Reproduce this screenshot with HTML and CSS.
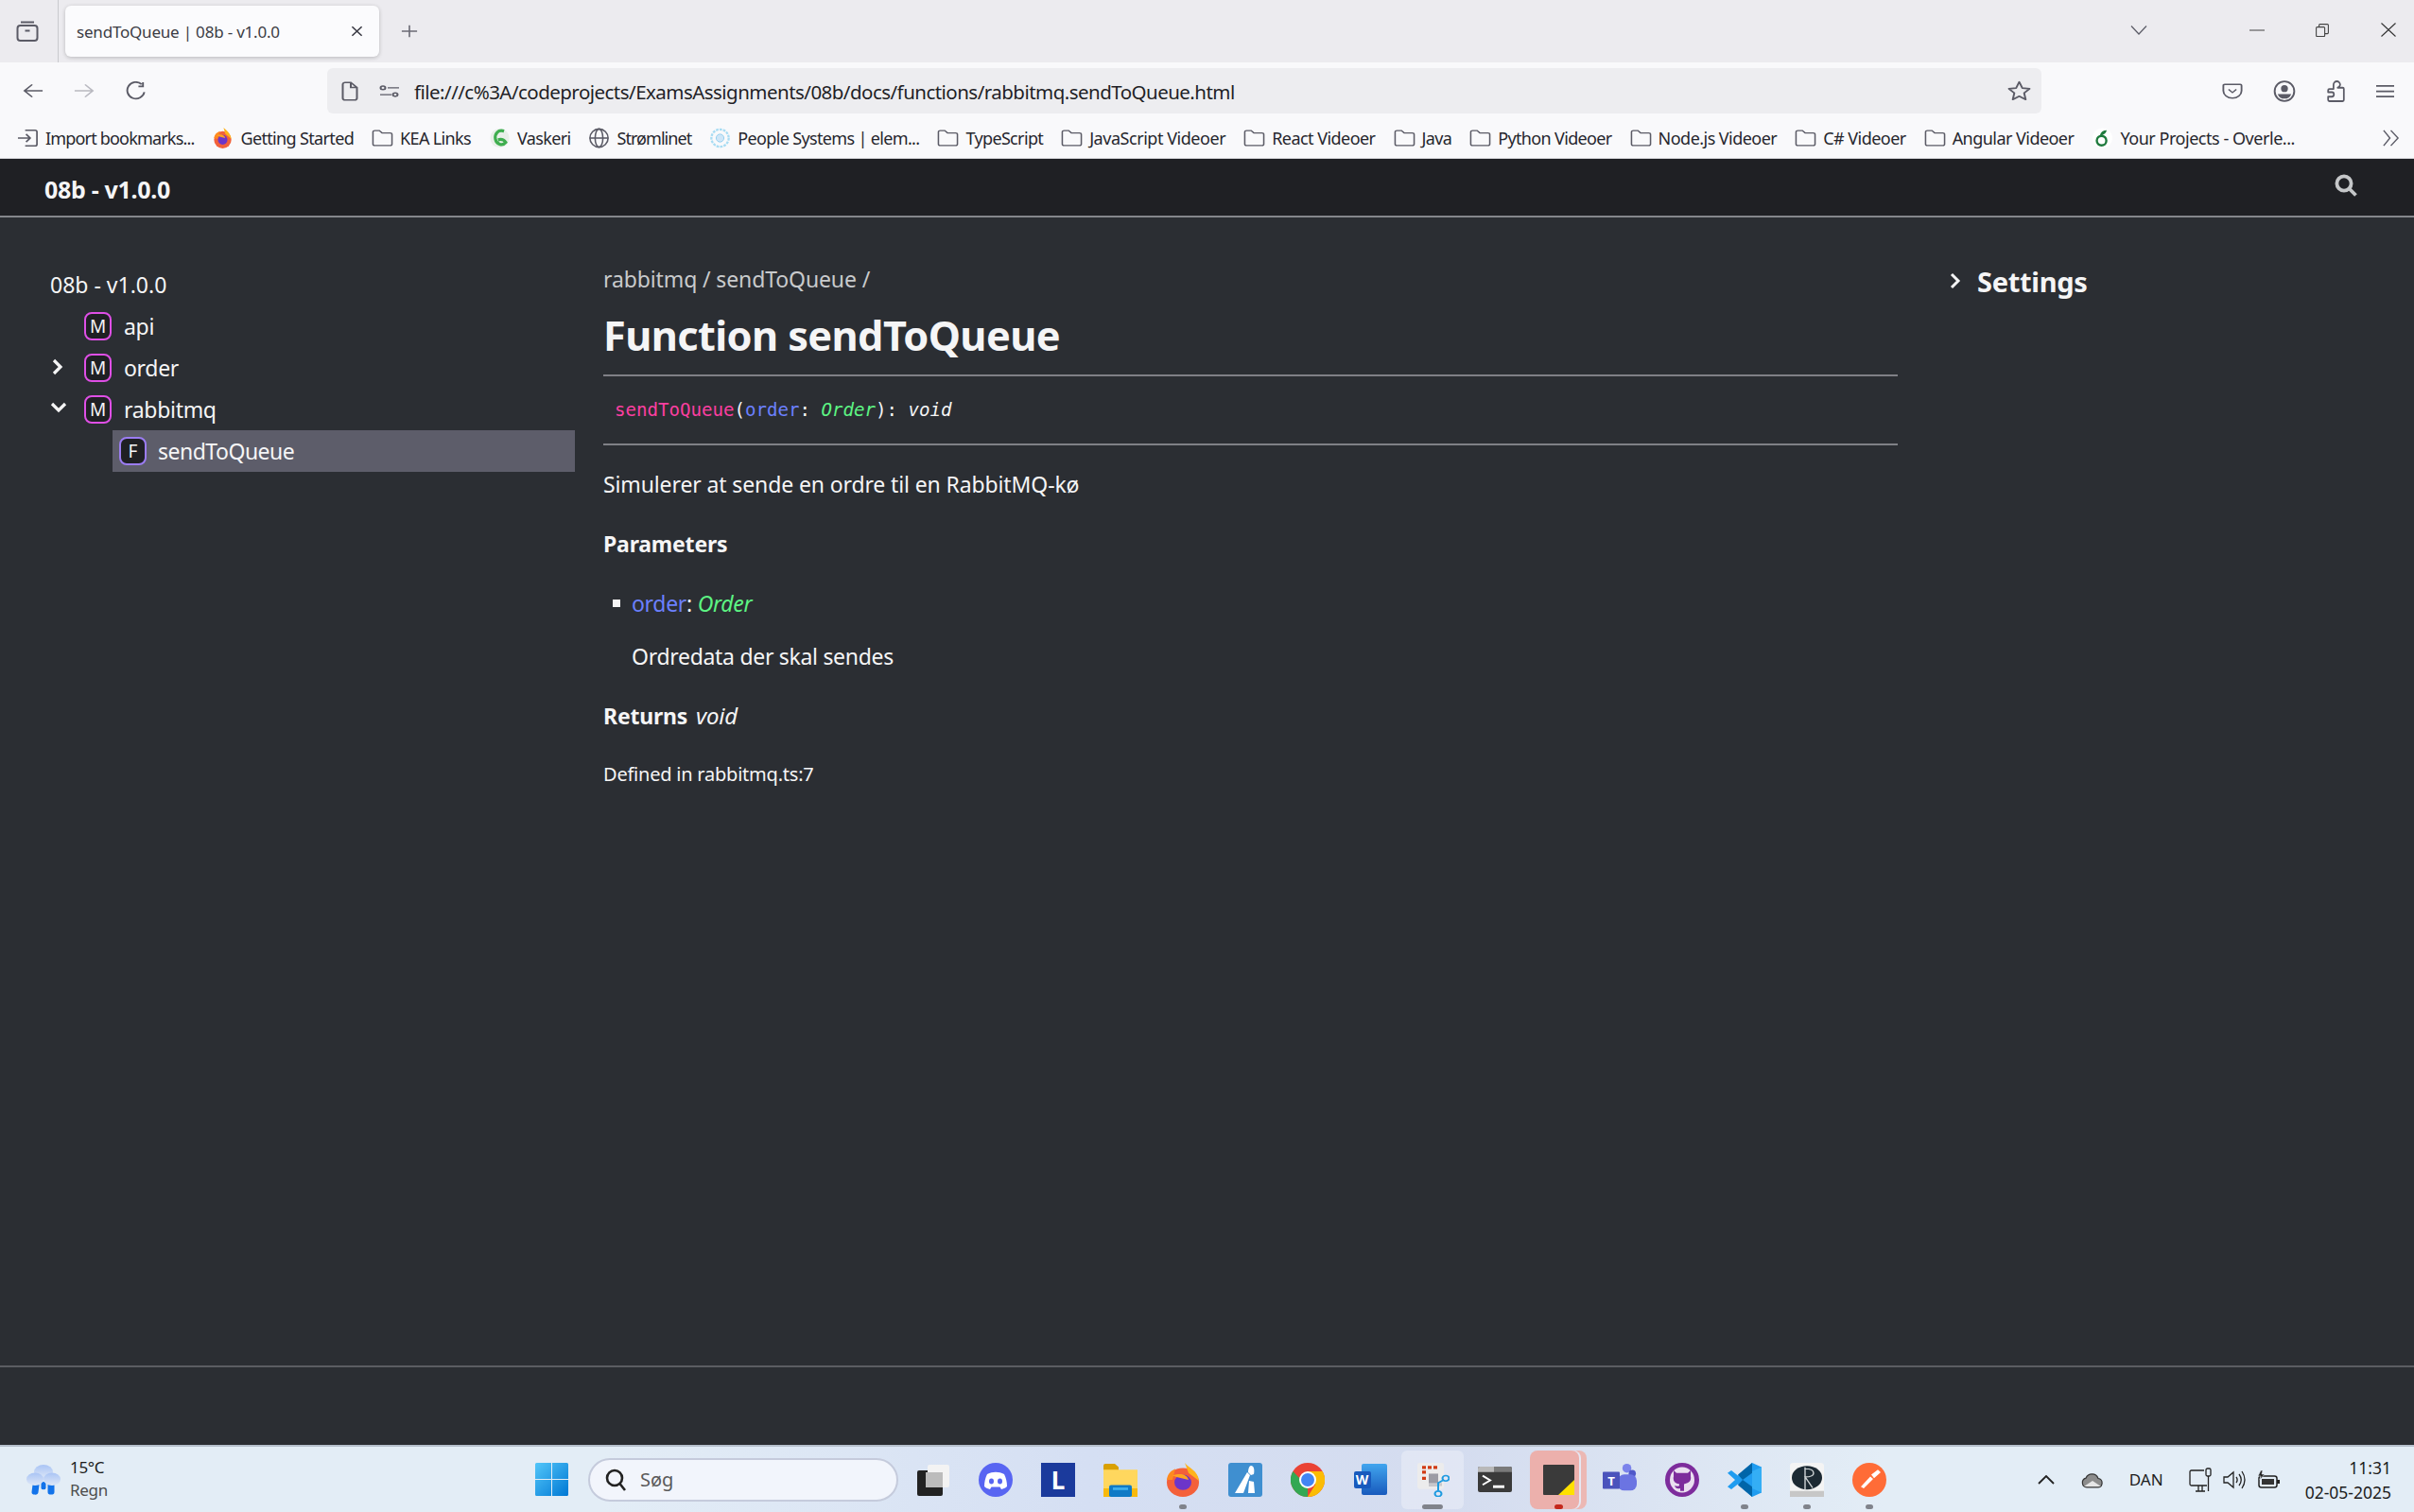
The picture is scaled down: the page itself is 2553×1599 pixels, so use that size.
FILE: index.html
```html
<!DOCTYPE html>
<html lang="da">
<head>
<meta charset="utf-8">
<title>sendToQueue | 08b - v1.0.0</title>
<link rel="stylesheet" href="styles.css">
</head>
<body>
<svg class="defs" width="0" height="0">
  <defs>
    <symbol id="folder" viewBox="0 0 24 24" preserveAspectRatio="none"><path d="M1.500 4.500a2 2 0 0 1 2-2h5l3 3h9a2 2 0 0 1 2 2v12a2 2 0 0 1-2 2h-17a2 2 0 0 1-2-2z" fill="none" stroke="#5b5b66" stroke-width="1.600"/></symbol>
  </defs>
</svg>
<div class="window">
  <div class="tabstrip">
    <div class="side-btn">
      <svg class="ico24" viewBox="0 0 24 24" fill="none" stroke="#5b5b66" stroke-width="2"><path d="M5 2.500h14"/><rect x="1.500" y="6" width="21" height="16" rx="3"/><path d="M9.500 11.500h5"/></svg>
    </div>
    <div class="tab">
      <span class="tab-title">sendToQueue | 08b - v1.0.0</span>
      <svg class="ico14" viewBox="0 0 14 14" preserveAspectRatio="none" stroke="#3a3a44" stroke-width="1.700"><path d="M1.500 1.500l11 11M12.500 1.500l-11 11"/></svg>
    </div>
    <svg class="newtab" viewBox="0 0 20 20" preserveAspectRatio="none" stroke="#6b6b76" stroke-width="1.800"><path d="M10 1v18M1 10h18"/></svg>
    <div class="win-controls">
      <svg class="win-chev" viewBox="0 0 18 10" fill="none" stroke="#5b5b66" stroke-width="1.200"><path d="M1 .5l8 8.500 8-8.500"/></svg>
      <svg class="win-min" viewBox="0 0 16 2" stroke="#444" stroke-width="1"><path d="M0 1h16"/></svg>
      <svg class="win-max" viewBox="0 0 14 14" fill="none" stroke="#444" stroke-width="1.100"><rect x=".6" y="3.600" width="9" height="10" rx="1"/><path d="M3.600 3.600V1.600a1 1 0 0 1 1-1h7.800a1 1 0 0 1 1 1v8a1 1 0 0 1-1 1H9.600"/></svg>
      <svg class="win-close" viewBox="0 0 16 15" fill="none" stroke="#333" stroke-width="1.100"><path d="M.5.500l15 14M15.500.500l-15 14"/></svg>
    </div>
  </div>

  <div class="toolbar">
    <svg class="nav-back" viewBox="0 0 24 24" preserveAspectRatio="none" fill="none" stroke="#5b5b66" stroke-width="2"><path d="M23 12H2M11 2l-9 10 9 10"/></svg>
    <svg class="nav-fwd" viewBox="0 0 24 24" preserveAspectRatio="none" fill="none" stroke="#b9b9c0" stroke-width="2"><path d="M1 12h21M13 2l9 10-9 10"/></svg>
    <svg class="nav-reload" viewBox="0 0 24 24" preserveAspectRatio="none" fill="none" stroke="#5b5b66" stroke-width="2"><path d="M20.500 13a9.500 10 0 1 1-3-9.500M19 1v5h-5"/></svg>
    <div class="urlbar">
      <svg class="doc-ico" viewBox="0 0 18 26" preserveAspectRatio="none" fill="none" stroke="#5b5b66" stroke-width="2"><path d="M1.500 4a2.500 2.500 0 0 1 2.500-2.500h6l6.500 6.500v14a2.500 2.500 0 0 1-2.500 2.500H4a2.500 2.500 0 0 1-2.500-2.500zM10 1.500V8h6.500"/></svg>
      <svg class="ctl-ico" viewBox="0 0 22 18" preserveAspectRatio="none" fill="none" stroke="#5b5b66" stroke-width="2"><path d="M9 4h12M1 14h12"/><circle cx="4" cy="4" r="2.500"/><circle cx="17" cy="14" r="2.500"/></svg>
      <span class="url-text">file:///c%3A/codeprojects/ExamsAssignments/08b/docs/functions/rabbitmq.sendToQueue.html</span>
      <svg class="star-ico" viewBox="0 0 26 26" preserveAspectRatio="none" fill="none" stroke="#5b5b66" stroke-width="2" stroke-linejoin="round"><path d="M13 2l3.400 7.500 8 .9-6 5.500 1.700 8L13 19.800 5.900 23.900l1.700-8-6-5.500 8-.9z"/></svg>
    </div>
    <div class="tool-right">
      <svg class="tool-pocket" viewBox="0 0 24 24" preserveAspectRatio="none" fill="none" stroke="#5b5b66" stroke-width="2"><path d="M3 3h18a1.500 1.500 0 0 1 1.500 1.500V12a10.500 10.500 0 0 1-21 0V4.500A1.500 1.500 0 0 1 3 3z"/><path d="M7.500 10l4.500 4.500 4.500-4.500" stroke-width="1.700"/></svg>
      <svg class="tool-profile" viewBox="0 0 24 24"><circle cx="12" cy="12" r="10.800" fill="none" stroke="#5b5b66" stroke-width="2"/><circle cx="12" cy="9" r="3.800" fill="#5b5b66"/><path d="M4.500 15h15a8 8 0 0 1-15 0z" fill="#5b5b66"/></svg>
      <svg class="tool-ext" viewBox="0 0 24 24" preserveAspectRatio="none" fill="none" stroke="#5b5b66" stroke-width="2" stroke-linejoin="round"><path d="M14 8h6a1.500 1.500 0 0 1 1.500 1.500v12A1.500 1.500 0 0 1 20 23H4a1.500 1.500 0 0 1-1.500-1.500V18H7a2.500 2.500 0 0 0 0-5H2.500v-2A1.500 1.500 0 0 1 4 9.500h5V5a4 4 0 0 1 8 0 4 4 0 0 1-3 3z"/></svg>
      <svg class="tool-menu" viewBox="0 0 24 24" preserveAspectRatio="none" stroke="#5b5b66" stroke-width="2.800"><path d="M0 3h24M0 12h24M0 21h24"/></svg>
    </div>
  </div>

  <div class="bookmarks">
    <div class="bm bm-tighter"><svg class="bm-ico" viewBox="0 0 24 24" preserveAspectRatio="none" fill="none" stroke="#5b5b66" stroke-width="1.800"><path d="M9 3h11a2 2 0 0 1 2 2v14a2 2 0 0 1-2 2H9M1 12h13M10 7.500l4.500 4.500L10 16.500"/></svg><span>Import bookmarks...</span></div>
    <div class="bm"><svg class="bm-ico" viewBox="0 0 24 24"><circle cx="12" cy="14" r="10" fill="#f2613a"/><path d="M13 0c3 3 8 6 9 13L15 7z" fill="#ffb31a"/><path d="M2 12C3 6 7 5 9 4L6 13z" fill="#ff8a1f"/><circle cx="12" cy="14" r="5.500" fill="#6c35c9"/><path d="M5 9c4-2 9-1 10 3-3-1-6-1-10-3z" fill="#ffa41f"/></svg><span>Getting Started</span></div>
    <div class="bm"><svg class="bm-folder"><use href="#folder"/></svg><span>KEA Links</span></div>
    <div class="bm"><svg class="bm-ico" viewBox="0 0 24 24" fill="none"><circle cx="12" cy="12" r="11" fill="#e9efe9"/><path d="M17 4c-7-2-11 3-10 9 1 6 8 9 12 4-2-3-5-4-9-3" stroke="#3fae4f" stroke-width="3.500"/></svg><span>Vaskeri</span></div>
    <div class="bm bm-tightest"><svg class="bm-ico" viewBox="0 0 24 24" fill="none" stroke="#5b5b66" stroke-width="1.700"><circle cx="12" cy="12" r="10.500"/><ellipse cx="12" cy="12" rx="4.500" ry="10.500"/><path d="M1.500 12h21"/></svg><span>Strømlinet</span></div>
    <div class="bm"><svg class="bm-ico" viewBox="0 0 24 24" fill="none"><circle cx="12" cy="12" r="10" stroke="#a8dcf3" stroke-width="2.500" stroke-dasharray="3 1.200"/><circle cx="12" cy="12" r="4.500" fill="#cfe6f7" stroke="#8fcdee"/></svg><span>People Systems | elem...</span></div>
    <div class="bm"><svg class="bm-folder"><use href="#folder"/></svg><span>TypeScript</span></div>
    <div class="bm bm-loose"><svg class="bm-folder"><use href="#folder"/></svg><span>JavaScript Videoer</span></div>
    <div class="bm bm-mid"><svg class="bm-folder"><use href="#folder"/></svg><span>React Videoer</span></div>
    <div class="bm"><svg class="bm-folder"><use href="#folder"/></svg><span>Java</span></div>
    <div class="bm"><svg class="bm-folder"><use href="#folder"/></svg><span>Python Videoer</span></div>
    <div class="bm bm-mid"><svg class="bm-folder"><use href="#folder"/></svg><span>Node.js Videoer</span></div>
    <div class="bm bm-mid"><svg class="bm-folder"><use href="#folder"/></svg><span>C# Videoer</span></div>
    <div class="bm bm-mid"><svg class="bm-folder"><use href="#folder"/></svg><span>Angular Videoer</span></div>
    <div class="bm bm-loose"><svg class="bm-ico" viewBox="0 0 24 24" fill="none"><circle cx="12" cy="12" r="11.500" fill="#fff"/><circle cx="11" cy="15" r="5.500" stroke="#1f7a3d" stroke-width="2.600"/><path d="M9 9c1-4 4-6 8-6-1 4-4 6-8 6z" fill="#1f7a3d"/></svg><span>Your Projects - Overle...</span></div>
    <svg class="bm-more" viewBox="0 0 20 20" preserveAspectRatio="none" fill="none" stroke="#5b5b66" stroke-width="1.500"><path d="M2 1l7 9-7 9M10 1l8 9-8 9"/></svg>
  </div>

  <div class="page">
    <header class="site-head">
      <span class="site-title">08b - v1.0.0</span>
      <svg class="search-ico" viewBox="0 0 24 24" fill="none" stroke="#c5c7c9" stroke-width="3.800"><circle cx="10" cy="10" r="7.600"/><path d="M15.500 15.500l7 7"/></svg>
    </header>
    <main class="main">
      <nav class="sidebar">
        <div class="nav-root">08b - v1.0.0</div>
        <div class="nav-row"><span class="twisty"></span><span class="badge mod">M</span><span>api</span></div>
        <div class="nav-row"><span class="twisty"><svg class="chev-r" viewBox="0 0 12 18" fill="none" stroke="#f5f5f6" stroke-width="3.200"><path d="M2 2l7 7-7 7"/></svg></span><span class="badge mod">M</span><span>order</span></div>
        <div class="nav-row"><span class="twisty"><svg class="chev-d" viewBox="0 0 18 12" fill="none" stroke="#f5f5f6" stroke-width="3.200"><path d="M2 2l7 7 7-7"/></svg></span><span class="badge mod">M</span><span>rabbitmq</span></div>
        <div class="nav-row selected"><span class="badge fn">F</span><span>sendToQueue</span></div>
      </nav>
      <article class="content">
        <div class="crumbs">rabbitmq / sendToQueue /</div>
        <h1 class="title">Function sendToQueue</h1>
        <div class="signature"><span class="c-fn">sendToQueue</span>(<span class="c-var">order</span>: <span class="c-type">Order</span>): <span class="c-void">void</span></div>
        <p class="para">Simulerer at sende en ordre til en RabbitMQ-kø</p>
        <h4 class="subhead">Parameters</h4>
        <div class="param"><span class="bullet"></span><span><span class="p-name">order</span>: <em class="p-type">Order</em></span></div>
        <p class="param-doc">Ordredata der skal sendes</p>
        <h4 class="subhead returns">Returns <em class="ret-type">void</em></h4>
        <p class="defined">Defined in rabbitmq.ts:7</p>
      </article>
      <aside class="settings">
        <svg class="chev-s" viewBox="0 0 12 18" fill="none" stroke="#f5f5f6" stroke-width="3"><path d="M2 2l7 7-7 7"/></svg>
        <span>Settings</span>
      </aside>
    </main>
    <footer class="site-foot"></footer>
  </div>

  <div class="taskbar">
    <div class="weather">
      <svg class="weather-ico" viewBox="0 0 36 42" preserveAspectRatio="none"><defs><linearGradient id="cl" x1="0" y1="0" x2="0" y2="1"><stop offset="0" stop-color="#a9c4f5"/><stop offset="1" stop-color="#dfe8f7"/></linearGradient></defs><path d="M10 28l-1 10M26 28v10" stroke="#1273ea" stroke-width="7" stroke-linecap="round"/><path d="M18 26v6" stroke="#1273ea" stroke-width="5" stroke-linecap="round"/><circle cx="18" cy="10" r="10" fill="url(#cl)"/><circle cx="9" cy="20" r="9" fill="url(#cl)"/><circle cx="27" cy="20" r="9" fill="url(#cl)"/></svg>
      <div class="weather-text"><span class="temp">15°C</span><span class="cond">Regn</span></div>
    </div>
    <div class="apps">
      <svg class="winlogo" viewBox="0 0 35 35"><defs><linearGradient id="wl" x1="0" y1="0" x2="1" y2="1"><stop offset="0" stop-color="#52c6f9"/><stop offset="1" stop-color="#0078d4"/></linearGradient></defs><path d="M0 1.500A1.500 1.500 0 0 1 1.500 0H17v17H0zM18 0h15.500A1.500 1.500 0 0 1 35 1.500V17H18zM0 18h17v17H1.500A1.500 1.500 0 0 1 0 33.500zM18 18h17v15.500a1.500 1.500 0 0 1-1.500 1.500H18z" fill="url(#wl)"/></svg>
      <div class="searchbox">
        <svg class="s-ico" viewBox="0 0 22 24" fill="none" stroke="#222" stroke-width="2.600"><circle cx="10" cy="10" r="8"/><path d="M15.500 16l5.500 7"/></svg>
        <span>Søg</span>
      </div>
      <div class="cell"><svg class="app" viewBox="0 0 36 36"><rect x="1" y="8" width="27" height="27" rx="2" fill="#222"/><rect x="12" y="2" width="23" height="24" rx="2" fill="#f3f3f3"/><rect x="10" y="10" width="18" height="16" fill="#bcbcbc"/></svg></div>
      <div class="cell"><svg class="app" viewBox="0 0 36 36"><circle cx="18" cy="18" r="18" fill="#5865f2"/><path d="M9 12c6-3 12-3 18 0 2 4 3 8 3 13-2 2-4 2.500-6 3l-1.500-2.500h-9L12 28c-2-.5-4-1-6-3 0-5 1-9 3-13z" fill="#fff"/><ellipse cx="13.500" cy="19.500" rx="2.500" ry="3" fill="#5865f2"/><ellipse cx="22.500" cy="19.500" rx="2.500" ry="3" fill="#5865f2"/></svg></div>
      <div class="cell"><span class="app-l">L</span></div>
      <div class="cell"><svg class="app" viewBox="0 0 36 40" preserveAspectRatio="none"><path d="M0 3a2 2 0 0 1 2-2h10l4 4v6H0z" fill="#d9a002"/><path d="M0 8h36v32H0z" fill="#ffd75e"/><path d="M0 30h36v10H0z" fill="#f9b90c"/><rect x="6" y="26" width="24" height="14" rx="2" fill="#0f7ac6"/><rect x="10" y="29" width="16" height="3" fill="#3fb1ee"/></svg></div>
      <div class="cell running"><svg class="app" viewBox="0 0 36 40" preserveAspectRatio="none"><circle cx="18" cy="23" r="17" fill="#f4603a"/><path d="M20 0c4 6 14 9 15 21L24 12z" fill="#ffb31a"/><path d="M1 20C2 11 7 9 10 7L7 20z" fill="#ff8a1f"/><circle cx="18" cy="23" r="9" fill="#6c35c9"/><path d="M7 15c8-3 15-2 17 5-6-2-11-2-17-5z" fill="#ffa41f"/></svg></div>
      <div class="cell"><svg class="app" viewBox="0 0 36 36"><rect width="36" height="36" rx="3" fill="#3f8fd0"/><path d="M7 32L20 10l3 3-7 19zM24 3c3 0 4 4 3 9l-3 1-3-3c0-3 1-7 3-7zM22 19l5 1 1 12h-7z" fill="#fff"/></svg></div>
      <div class="cell"><svg class="app" viewBox="0 0 36 36"><circle cx="18" cy="18" r="18" fill="#ea4335"/><path d="M18 36A18 18 0 0 1 2.400 9L11 18l7 9 0 9z" fill="#34a853"/><path d="M18 9h15.600A18 18 0 0 1 18 36l8-13z" fill="#fbbc04"/><circle cx="18" cy="18" r="9" fill="#fff"/><circle cx="18" cy="18" r="7" fill="#4285f4"/></svg></div>
      <div class="cell"><div class="word"><span class="word-w">W</span></div></div>
      <div class="cell wide-dot snip"><svg class="app" viewBox="0 0 36 44" preserveAspectRatio="none"><rect x="2" y="0" width="28" height="34" rx="3" fill="#ececec"/><path d="M7 4h4v4H7zM13 4h4v4h-4zM19 4h4v4h-4zM7 10h4v4H7zM7 18h4v4H7z" fill="#d13b14"/><path d="M14 14h10v16H14z" fill="#9c9ca4"/><path d="M14 30h14v-4H14z" fill="#c8c8cc"/><circle cx="32" cy="20" r="3.500" fill="none" stroke="#1e9be0" stroke-width="2"/><circle cx="24" cy="40" r="3.500" fill="none" stroke="#1e9be0" stroke-width="2"/><path d="M24 36V26l6-4" stroke="#1e9be0" stroke-width="2" fill="none"/></svg></div>
      <div class="cell"><svg class="app-term" viewBox="0 0 36 28" preserveAspectRatio="none"><rect width="36" height="28" rx="2" fill="#3a3a3a"/><path d="M0 2a2 2 0 0 1 2-2h15v6H0z" fill="#b9b9b9"/><path d="M17 0h17a2 2 0 0 1 2 2v4H17z" fill="#7a7a7a"/><path d="M5 10l8 5-8 5" fill="none" stroke="#fff" stroke-width="2"/><path d="M16 22h12" stroke="#fff" stroke-width="3"/></svg></div>
      <div class="cell sticky"><svg class="app-sticky" viewBox="0 0 33 32"><rect width="33" height="32" rx="1" fill="#3a3a3a"/><path d="M33 16v16H16z" fill="#ffe100"/></svg></div>
      <div class="cell"><svg class="app" viewBox="0 0 38 38" preserveAspectRatio="none"><circle cx="27" cy="6" r="5" fill="#7b83eb"/><circle cx="33" cy="12" r="4" fill="#5059c9"/><rect x="17" y="13" width="21" height="18" rx="7" fill="#6b74e2"/><rect x="0" y="10" width="19" height="19" rx="1" fill="#4b53bc"/><text x="9.500" y="25" class="teams-t">T</text></svg></div>
      <div class="cell"><svg class="app" viewBox="0 0 36 40" preserveAspectRatio="none"><ellipse cx="18" cy="20" rx="18" ry="20" fill="#7d2c9c"/><ellipse cx="18" cy="20" rx="13" ry="15" fill="#eadff0"/><path d="M9 9l3 3h12l3-3v7c1 5-2 8-7 9v8h-4v-3c-3 1-5 0-6-3 2 0 3 1 5 0v-2c-5-1-7-4-6-9z" fill="#7d2c9c"/></svg></div>
      <div class="cell running"><svg class="app" viewBox="0 0 36 40" preserveAspectRatio="none"><path d="M26 0l10 5v30l-10 5-15-15-7 6-4-3 8-8-8-8 4-3 7 6z" fill="#1f9cf0"/><path d="M26 0L11 14l5 6 10-8zM26 28l-10-8-5 6 15 14z" fill="#0065a9"/><path d="M26 10v20l10 5V5z" fill="#34aef5"/></svg></div>
      <div class="cell running"><svg class="app" viewBox="0 0 36 46" preserveAspectRatio="none"><rect width="36" height="46" rx="4" fill="#f4f4f4"/><rect y="38" width="36" height="8" fill="#c7c7c7"/><circle cx="18" cy="20" r="16" fill="#1d2a33"/><path d="M16 6v30M16 8c7 0 9 3 9 6s-3 5-9 5l8 15" fill="none" stroke="#cfd4d6" stroke-width="1.400"/></svg></div>
      <div class="cell running"><svg class="app" viewBox="0 0 36 40" preserveAspectRatio="none"><ellipse cx="18" cy="20" rx="18" ry="20" fill="#ff6c37"/><path d="M9 28l10-12 3 3-10 11zM20 14l7-6 3 3-7 7z" fill="#fff"/></svg></div>
    </div>
    <div class="tray">
      <svg class="tray-chev" viewBox="0 0 18 10" fill="none" stroke="#222" stroke-width="1.800"><path d="M1 9l8-8 8 8"/></svg>
      <svg class="tray-cloud" viewBox="0 0 24 18"><path d="M6 17a5 5 0 0 1-1-9.800A7 7 0 0 1 18 7.500a4.800 4.800 0 0 1 0 9.500z" fill="#8c8c8c" stroke="#333" stroke-width="1.200"/><path d="M3 16l9-6 9 6z" fill="#e6e6e6"/></svg>
      <span class="tray-lang">DAN</span>
      <svg class="tray-net" viewBox="0 0 24 26" fill="none" stroke="#222" stroke-width="1.300"><path d="M16 3H2.500A1.500 1.500 0 0 0 1 4.500v13A1.500 1.500 0 0 0 2.500 19H19M7 25h10M10 19v6M14 19v6"/><rect x="18" y="1" width="5" height="8" rx="1.500"/><path d="M20.500 9v16"/></svg>
      <svg class="tray-vol" viewBox="0 0 24 22" fill="none" stroke="#222" stroke-width="1.300"><path d="M1 8v6h4l6 5V3L5 8z"/><path d="M14 8c1.500 2 1.500 4 0 6M17 5c3 4 3 8 0 12M20 2c4 6 4 12 0 18"/></svg>
      <svg class="tray-bat" viewBox="0 0 24 20"><rect x="2" y="6" width="19" height="12" rx="2.500" fill="none" stroke="#222" stroke-width="1.500"/><rect x="5" y="9" width="13" height="6" fill="#333"/><rect x="21" y="10" width="3" height="4" fill="#222"/><path d="M4 0L1 6h3L3 10l5-6H5l1-4z" fill="#222" stroke="#e3edf6" stroke-width=".6"/></svg>
      <div class="clock"><span>11:31</span><span>02-05-2025</span></div>
    </div>
  </div>
</div>
</body>
</html>
```

FILE: styles.css
```css
* { box-sizing: border-box; }
html, body { margin: 0; padding: 0; height: 100%; }
body { font-family: "Noto Sans", "Liberation Sans", sans-serif; overflow: hidden; }
svg { display: block; flex: none; }
.defs { position: absolute; }
.window { display: flex; flex-direction: column; height: 1599px; }

/* tab strip */
.tabstrip { display: flex; align-items: center; height: 66px; background: #ecebef; flex: none; }
.side-btn { width: 62px; height: 66px; border-right: 1px solid #c9c9ce; display: flex; align-items: center; justify-content: center; }
.ico24 { width: 24px; height: 24px; margin-left: -4px; }
.tab { width: 332px; height: 54px; margin-left: 7px; background: #fbfbfd; border-radius: 6px; box-shadow: 0 1px 4px rgba(0,0,0,.22); display: flex; align-items: center; justify-content: space-between; padding: 0 17px 0 12px; }
.tab-title { font-size: 17px; letter-spacing: -.2px; color: #3c3c44; white-space: nowrap; }
.ico14 { width: 13px; height: 12px; }
.newtab { width: 18px; height: 14px; margin-left: 23px; }
.win-controls { margin-left: auto; display: flex; align-items: center; padding-bottom: 3px; }
.win-chev { width: 18px; height: 10px; margin-right: 108px; }
.win-min { width: 16px; height: 2px; margin-right: 54px; }
.win-max { width: 14px; height: 14px; margin-right: 55px; }
.win-close { width: 16px; height: 15px; margin-right: 19px; }

/* toolbar */
.toolbar { display: flex; align-items: center; height: 54px; padding-top: 6px; background: #f9f9fb; flex: none; }
.nav-back { width: 22px; height: 16px; margin-left: 24px; }
.nav-fwd { width: 22px; height: 16px; margin-left: 32px; }
.nav-reload { width: 23px; height: 21px; margin-left: 33px; }
.urlbar { width: 1813px; height: 48px; margin-left: 190px; background: #ededf0; border-radius: 6px; display: flex; align-items: center; padding: 0 11px 0 15px; }
.doc-ico { width: 18px; height: 21px; }
.ctl-ico { width: 22px; height: 13px; margin-left: 22px; }
.url-text { margin-left: 15px; padding-top: 2px; font-size: 20.500px; letter-spacing: -.53px; color: #1f1f26; white-space: nowrap; }
.star-ico { width: 25px; height: 22px; margin-left: auto; }
.tool-right { display: flex; align-items: center; margin-left: 191px; gap: 32px; }
.tool-pocket { width: 22px; height: 18px; }
.tool-profile { width: 24px; height: 23px; }
.tool-ext { width: 21px; height: 23px; }
.tool-menu { width: 19px; height: 15px; }

/* bookmarks */
.bookmarks { display: flex; align-items: center; height: 48px; padding: 5px 15px 0 18px; background: #f9f9fb; border-bottom: 1px solid #d4d4d8; flex: none; font-size: 18px; color: #26262d; gap: 19px; }
.bm { display: flex; align-items: center; gap: 7px; white-space: nowrap; letter-spacing: -.65px; }
.bm-tighter { letter-spacing: -.82px; }
.bm-tightest { letter-spacing: -.95px; }
.bm-mid { letter-spacing: -.54px; }
.bm-loose { letter-spacing: -.46px; }
.bm-ico { width: 23px; height: 22px; }
.bm-folder { width: 23px; height: 20px; }
.bm-more { width: 19px; height: 18px; margin-left: auto; }

/* docs page */
.page { flex: 1; display: flex; flex-direction: column; background: #2b2e33; color: #f5f5f6; min-height: 0; }
.site-head { display: flex; align-items: center; justify-content: space-between; height: 62px; padding: 3px 60px 0 47px; background: #1f2024; border-bottom: 2px solid #84868b; flex: none; }
.site-title { font-size: 25px; font-weight: 700; letter-spacing: -.3px; }
.search-ico { width: 24px; height: 24px; margin-bottom: 8px; }
.main { flex: 1; display: flex; min-height: 0; }
.sidebar { width: 638px; flex: none; padding: 49px 30px 0 53px; font-size: 23px; letter-spacing: -.3px; }
.nav-root { height: 44px; display: flex; align-items: center; letter-spacing: 0; }
.nav-row { height: 44px; display: flex; align-items: center; gap: 13px; }
.twisty { width: 36px; margin-right: -13px; display: flex; }
.chev-r { width: 12px; height: 18px; margin-left: 2px; margin-top: -3px; }
.chev-d { width: 18px; height: 12px; margin-top: -4px; }
.badge { width: 29px; height: 30px; border-radius: 8px; border: 2px solid; background: #1f2024; display: flex; align-items: center; justify-content: center; font-size: 19px; letter-spacing: 0; flex: none; }
.badge.mod { border-color: #df4fe6; }
.badge.fn { border-color: #9b7cf2; }
.nav-row.selected { margin-left: 66px; padding-left: 7px; background: #5d5d6a; gap: 12px; letter-spacing: -.5px; }

.content { width: 1369px; flex: none; padding-top: 45px; font-size: 23px; letter-spacing: -.3px; }
.crumbs { height: 40px; line-height: 40px; color: #c8cacc; letter-spacing: -.12px; }
.title { margin: 12px 0 0; height: 56px; line-height: 56px; font-size: 43.300px; font-weight: 700; letter-spacing: -.6px; }
.signature { margin-top: 13px; height: 75px; border-top: 2px solid #7f8086; border-bottom: 2px solid #7f8086; display: flex; align-items: center; padding-left: 12px; font-family: "DejaVu Sans Mono", monospace; font-size: 19.100px; letter-spacing: 0; white-space: pre; }
.c-fn { color: #fb3fa0; }
.c-var { color: #6b80ff; }
.c-type { color: #5df583; font-style: italic; }
.c-void { font-style: italic; }
.para { margin: 22px 0 0; height: 38px; line-height: 38px; letter-spacing: -.12px; }
.subhead { margin: 25px 0 0; height: 38px; line-height: 38px; font-size: 23px; font-weight: 700; letter-spacing: -.2px; }
.param { margin-top: 25px; height: 38px; line-height: 38px; display: flex; align-items: center; }
.bullet { width: 8px; height: 8px; background: #f5f5f6; margin: 0 12px 0 10px; flex: none; }
.p-name { color: #6b80ff; }
.p-type { color: #5df583; }
.param-doc { margin: 18px 0 0 30px; height: 38px; line-height: 38px; }
.ret-type { font-weight: 400; font-size: 24px; margin-left: 3px; }
.defined { margin: 24px 0 0; height: 38px; line-height: 38px; font-size: 20px; letter-spacing: -.22px; }
.settings { margin-left: 55px; padding-top: 46px; height: 89px; display: flex; align-items: center; gap: 17px; font-size: 29px; font-weight: 700; letter-spacing: -.3px; }
.chev-s { width: 12px; height: 18px; margin-top: -1px; }
.site-foot { height: 84px; flex: none; border-top: 2px solid #5b5d62; }

/* taskbar */
.taskbar { height: 71px; flex: none; display: flex; align-items: center; background: linear-gradient(90deg, #e3edf6 0%, #e3edf6 25%, #d5dff3 45%, #d4dcef 60%, #e3edf6 78%, #e3edf6 100%); border-top: 2px solid #b6c0cd; }
.weather { display: flex; align-items: center; gap: 10px; margin-left: 28px; width: 180px; }
.weather-ico { width: 36px; height: 32px; }
.weather-text { display: flex; flex-direction: column; font-size: 17px; line-height: 24px; letter-spacing: -.3px; color: #1c1c1c; margin-top: -2px; }
.cond { color: #4d4d4d; }
.apps { display: flex; align-items: center; margin-left: 358px; }
.winlogo { width: 35px; height: 35px; }
.searchbox { width: 328px; height: 46px; margin-left: 21px; margin-right: 4px; border-radius: 23px; background: #f2f5fc; border: 2px solid #c5cbdc; display: flex; align-items: center; padding-left: 16px; gap: 15px; font-size: 20px; color: #5a5a5a; }
.s-ico { width: 22px; height: 24px; }
.cell { width: 66px; height: 62px; display: flex; align-items: center; justify-content: center; position: relative; flex: none; }
.app { width: 36px; height: 36px; }
.app-term { width: 36px; height: 27px; }
.app-sticky { width: 33px; height: 32px; }
.app-l { width: 36px; height: 36px; background: #1b3a9c; color: #fff; font-weight: 700; font-size: 26px; display: flex; align-items: center; justify-content: center; }
.word { width: 27px; height: 33px; margin-left: 8px; background: linear-gradient(#41a5ee, #185abd); border-radius: 2px; display: flex; align-items: center; }
.word-w { width: 18px; height: 18px; margin-left: -8px; background: #185abd; color: #fff; font-size: 14px; font-weight: 700; line-height: 18px; text-align: center; border-radius: 2px; }
.teams-t { font-family: "Noto Sans", sans-serif; font-size: 14px; fill: #fff; text-anchor: middle; font-weight: 700; }
.running::after, .wide-dot::after { content: ""; position: absolute; bottom: 0; left: 29px; width: 8px; height: 5px; border-radius: 3px; background: #80838b; }
.wide-dot::after { left: 22px; width: 22px; }
.snip { background: rgba(255,255,255,.3); border-radius: 6px; }
.sticky { background: #ecb0ac; border-radius: 8px; box-shadow: 2px 0 0 #e6e8f4, 8px 0 0 #ecb8b4; width: 52px; margin: 0 10px 0 4px; padding-left: 9px; }
.sticky::after { content: ""; position: absolute; bottom: 0; left: 26px; width: 9px; height: 5px; border-radius: 3px; background: #c4281c; }
.tray { display: flex; align-items: center; margin-left: auto; padding-right: 24px; color: #1c1c1c; }
.tray-chev { width: 18px; height: 10px; }
.tray-cloud { width: 24px; height: 18px; margin-left: 28px; }
.tray-lang { margin-left: 27px; font-size: 17px; }
.tray-net { width: 24px; height: 26px; margin-left: 27px; }
.tray-vol { width: 24px; height: 22px; margin-left: 12px; }
.tray-bat { width: 24px; height: 20px; margin-left: 12px; }
.clock { display: flex; flex-direction: column; align-items: flex-end; margin-left: 27px; font-size: 17.500px; line-height: 26px; }
```
